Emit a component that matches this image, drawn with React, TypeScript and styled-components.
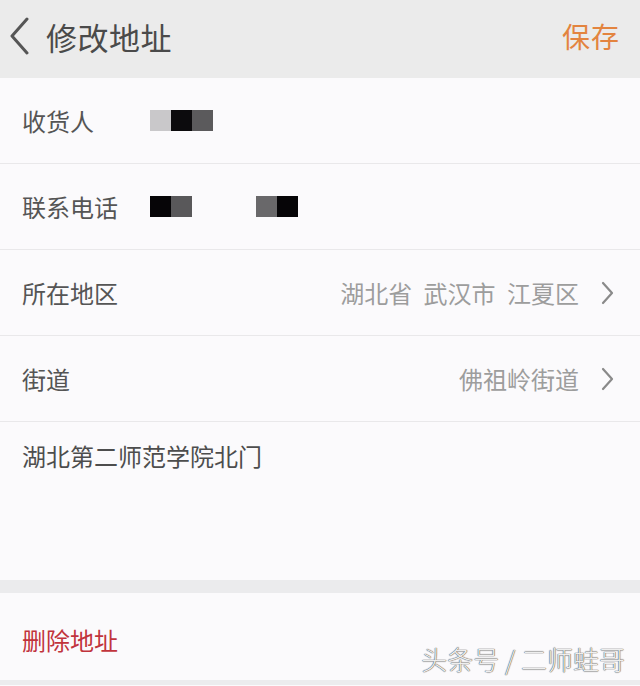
import React from "react";
import styled, { createGlobalStyle } from "styled-components";

const Global = createGlobalStyle`
  html, body { margin: 0; padding: 0; background: #fbfafc; }
  body { font-family: "Noto Sans CJK SC", "Noto Sans", sans-serif; }
  * { box-sizing: border-box; }
`;

const Page = styled.div`
  position: relative;
  width: 640px;
  height: 686px;
  overflow: hidden;
  background: #fbfafc;
  display: flex;
  flex-direction: column;
`;

const Header = styled.header`
  height: 78px;
  flex: none;
  background: #ebebeb;
  display: flex;
  align-items: center;
  padding: 0 20px 6px 7px;
`;

const BackButton = styled.div`
  width: 24px;
  height: 40px;
  display: flex;
  align-items: center;
  justify-content: center;
  margin-right: 15px;
`;

const Title = styled.h1`
  margin: 0;
  flex: 1;
  font-size: 31px;
  font-weight: 400;
  color: #4a4a4a;
  letter-spacing: 0.5px;
`;

const SaveButton = styled.span`
  font-size: 28px;
  color: #e3843f;
  letter-spacing: 1px;
`;

const List = styled.section`
  display: flex;
  flex-direction: column;
`;

const Row = styled.div`
  height: 86px;
  display: flex;
  align-items: center;
  padding: 0 26px 0 22px;
  border-bottom: 1px solid #e9e8ea;
`;

const Label = styled.span`
  width: 128px;
  flex: none;
  font-size: 24px;
  color: #555;
`;

const Value = styled.span`
  flex: 1;
  text-align: right;
  font-size: 24px;
  color: #9d9d9d;
  word-spacing: 6px;
  margin-right: 22px;
`;

const Masked = styled.div`
  display: flex;
  align-items: center;
`;

const Pixel = styled.span<{ $shade: string; $gap?: number }>`
  display: block;
  width: 21px;
  height: 21px;
  background: ${(p) => p.$shade};
  margin-left: ${(p) => p.$gap ?? 0}px;
`;

const AddressBlock = styled.div`
  height: 158px;
  padding: 16px 22px 0;
  font-size: 24px;
  line-height: 36px;
  color: #4d4d4d;
`;

const Band = styled.div`
  height: 13px;
  flex: none;
  background: #ebebed;
`;

const DeleteRow = styled.div`
  height: 87px;
  display: flex;
  align-items: center;
  padding: 6px 22px 0;
  font-size: 24px;
  color: #c1343c;
`;

const Foot = styled.div`
  height: 5px;
  background: #ececee;
`;

const Watermark = styled.span`
  position: absolute;
  right: 15px;
  bottom: 9px;
  font-size: 26px;
  font-weight: 300;
  color: #eeeeee;
  text-shadow: 0 0 1px #444, 0 0 1px #444;
`;

const Chevron = () => (
  <svg width="13" height="24" viewBox="0 0 13 24" fill="none">
    <path d="M2 2 L11 12 L2 22" stroke="#8a8a8a" strokeWidth="2.2" strokeLinecap="round" strokeLinejoin="round" />
  </svg>
);

const BackIcon = () => (
  <svg width="22" height="38" viewBox="0 0 22 38" fill="none">
    <path d="M19 2 L4 19 L19 36" stroke="#555" strokeWidth="3" strokeLinecap="round" strokeLinejoin="round" />
  </svg>
);

export default function App() {
  return (
    <>
      <Global />
      <Page>
        <Header>
          <BackButton>
            <BackIcon />
          </BackButton>
          <Title>修改地址</Title>
          <SaveButton>保存</SaveButton>
        </Header>
        <List>
          <Row>
            <Label>收货人</Label>
            <Masked>
              <Pixel $shade="#c9c8ca" />
              <Pixel $shade="#0c0b0d" />
              <Pixel $shade="#5b5a5c" />
            </Masked>
          </Row>
          <Row>
            <Label>联系电话</Label>
            <Masked>
              <Pixel $shade="#060507" />
              <Pixel $shade="#59585a" />
              <Pixel $shade="#69686a" $gap={64} />
              <Pixel $shade="#060507" />
            </Masked>
          </Row>
          <Row>
            <Label>所在地区</Label>
            <Value>湖北省 武汉市 江夏区</Value>
            <Chevron />
          </Row>
          <Row>
            <Label>街道</Label>
            <Value>佛祖岭街道</Value>
            <Chevron />
          </Row>
          <AddressBlock>湖北第二师范学院北门</AddressBlock>
        </List>
        <Band />
        <DeleteRow>删除地址</DeleteRow>
        <Foot />
        <Watermark>头条号 / 二师蛙哥</Watermark>
      </Page>
    </>
  );
}
